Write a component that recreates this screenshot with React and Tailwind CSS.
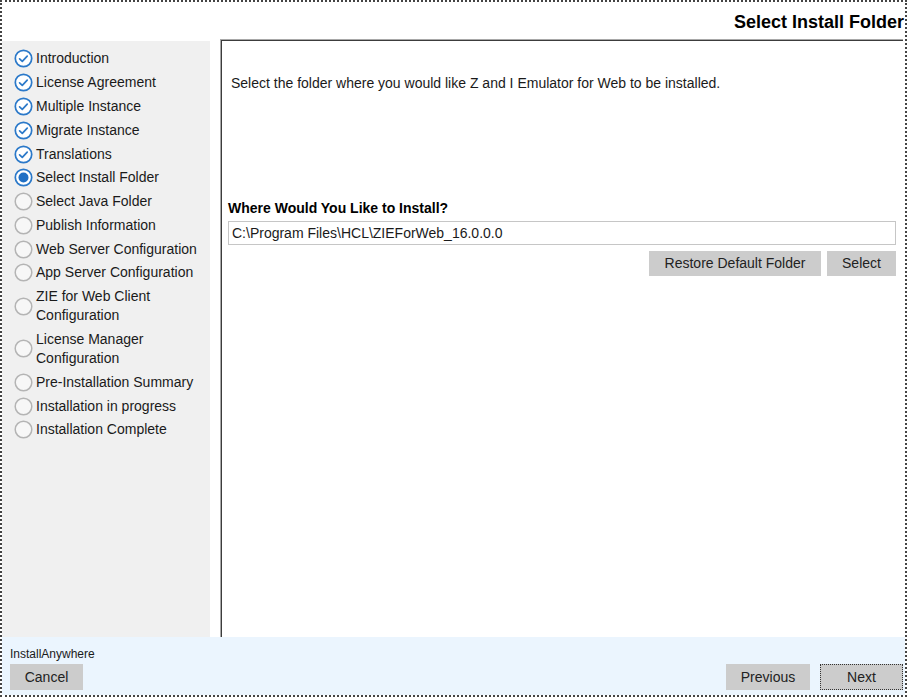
import React from "react";

const steps = [
  { label: "Introduction", state: "done" },
  { label: "License Agreement", state: "done" },
  { label: "Multiple Instance", state: "done" },
  { label: "Migrate Instance", state: "done" },
  { label: "Translations", state: "done" },
  { label: "Select Install Folder", state: "current" },
  { label: "Select Java Folder", state: "todo" },
  { label: "Publish Information", state: "todo" },
  { label: "Web Server Configuration", state: "todo" },
  { label: "App Server Configuration", state: "todo" },
  { label: ["ZIE for Web Client", "Configuration"], state: "todo" },
  { label: ["License Manager", "Configuration"], state: "todo" },
  { label: "Pre-Installation Summary", state: "todo" },
  { label: "Installation in progress", state: "todo" },
  { label: "Installation Complete", state: "todo" },
];

function StepIcon({ state }) {
  if (state === "done") {
    return (
      <svg width="19" height="19" viewBox="0 0 19 19" className="shrink-0">
        <circle cx="9.5" cy="9.5" r="8.2" fill="#ffffff" stroke="#2b79c9" strokeWidth="1.7" />
        <path d="M5.6 9.8 L8.3 12.3 L13.2 7.2" fill="none" stroke="#2b79c9" strokeWidth="1.7" strokeLinecap="round" strokeLinejoin="round" />
      </svg>
    );
  }
  if (state === "current") {
    return (
      <svg width="19" height="19" viewBox="0 0 19 19" className="shrink-0">
        <circle cx="9.5" cy="9.5" r="8.2" fill="#ffffff" stroke="#2b79c9" strokeWidth="1.7" />
        <circle cx="9.5" cy="9.5" r="5" fill="#1f6fc4" />
      </svg>
    );
  }
  return (
    <svg width="19" height="19" viewBox="0 0 19 19" className="shrink-0">
      <circle cx="9.5" cy="9.5" r="8.3" fill="#f7f7f7" stroke="#b4b4b4" strokeWidth="1.5" />
    </svg>
  );
}

export default function App() {
  const font = { fontFamily: '"Liberation Sans", Arial, sans-serif' };
  return (
    <div className="w-[909px] h-[697px] bg-white" style={font}>
      <div className="w-[907px] h-[697px] border-2 border-dotted border-[#444444] flex flex-col bg-white text-[#1a1a1a]">
        {/* header */}
        <div className="h-[37px] flex items-center justify-end pr-[1px] pt-[2px]">
          <span className="text-[18px] font-bold text-black leading-none">Select Install Folder</span>
        </div>
        {/* main */}
        <div className="flex-1 flex">
          <div className="w-[208px] mt-[2px] bg-[#f0f0f0] pt-[6px]">
            {steps.map((s, i) => (
              <div key={i} className="flex items-center py-[2.4px] pl-[12px] gap-[3px]">
                <StepIcon state={s.state} />
                <div className="text-[14px] leading-[19px] text-[#1a1a1a]">
                  {Array.isArray(s.label) ? (
                    s.label.map((l, j) => <div key={j}>{l}</div>)
                  ) : (
                    <div>{s.label}</div>
                  )}
                </div>
              </div>
            ))}
          </div>
          <div className="w-[10px]" />
          <div className="flex-1 border-t border-l border-[#a8a8a8]">
            <div className="h-full border-t border-l border-[#3c3c3c] bg-white">
              <div className="pl-[9px] pt-[34px] text-[14px] leading-[16px] text-[#1a1a1a]">
                Select the folder where you would like Z and I Emulator for Web to be installed.
              </div>
              <div className="pl-[6px] pr-[7px] mt-[109px]">
                <div className="text-[14px] leading-[16px] font-bold text-black">Where Would You Like to Install?</div>
                <div className="mt-[5px] h-[24px] border border-[#c6c6c6] flex items-center pl-[3px] text-[14px] text-[#1a1a1a]">
                  C:\Program Files\HCL\ZIEForWeb_16.0.0.0
                </div>
                <div className="mt-[6px] flex justify-end gap-[6px]">
                  <button className="h-[25px] w-[172px] bg-[#cccccc] text-[14px] text-[#222222]">Restore Default Folder</button>
                  <button className="h-[25px] w-[69px] bg-[#cccccc] text-[14px] text-[#222222]">Select</button>
                </div>
              </div>
            </div>
          </div>
          <div className="w-[2px]" />
        </div>
        {/* footer */}
        <div className="h-[58px] bg-[#ebf5fe] flex flex-col pl-[8px] pr-[2px]">
          <div className="text-[12px] leading-[14px] mt-[10px] text-[#1a1a1a]">InstallAnywhere</div>
          <div className="flex items-center mt-[3px] mb-[3px]">
            <button className="h-[26px] w-[73px] bg-[#cccccc] text-[14px] text-[#222222]">Cancel</button>
            <div className="flex-1" />
            <button className="h-[26px] w-[84px] bg-[#cccccc] text-[14px] text-[#222222]">Previous</button>
            <button className="ml-[10px] h-[26px] w-[83px] bg-[#cccccc] border border-dotted border-[#333333] text-[14px] text-[#222222]">Next</button>
          </div>
        </div>
      </div>
    </div>
  );
}
